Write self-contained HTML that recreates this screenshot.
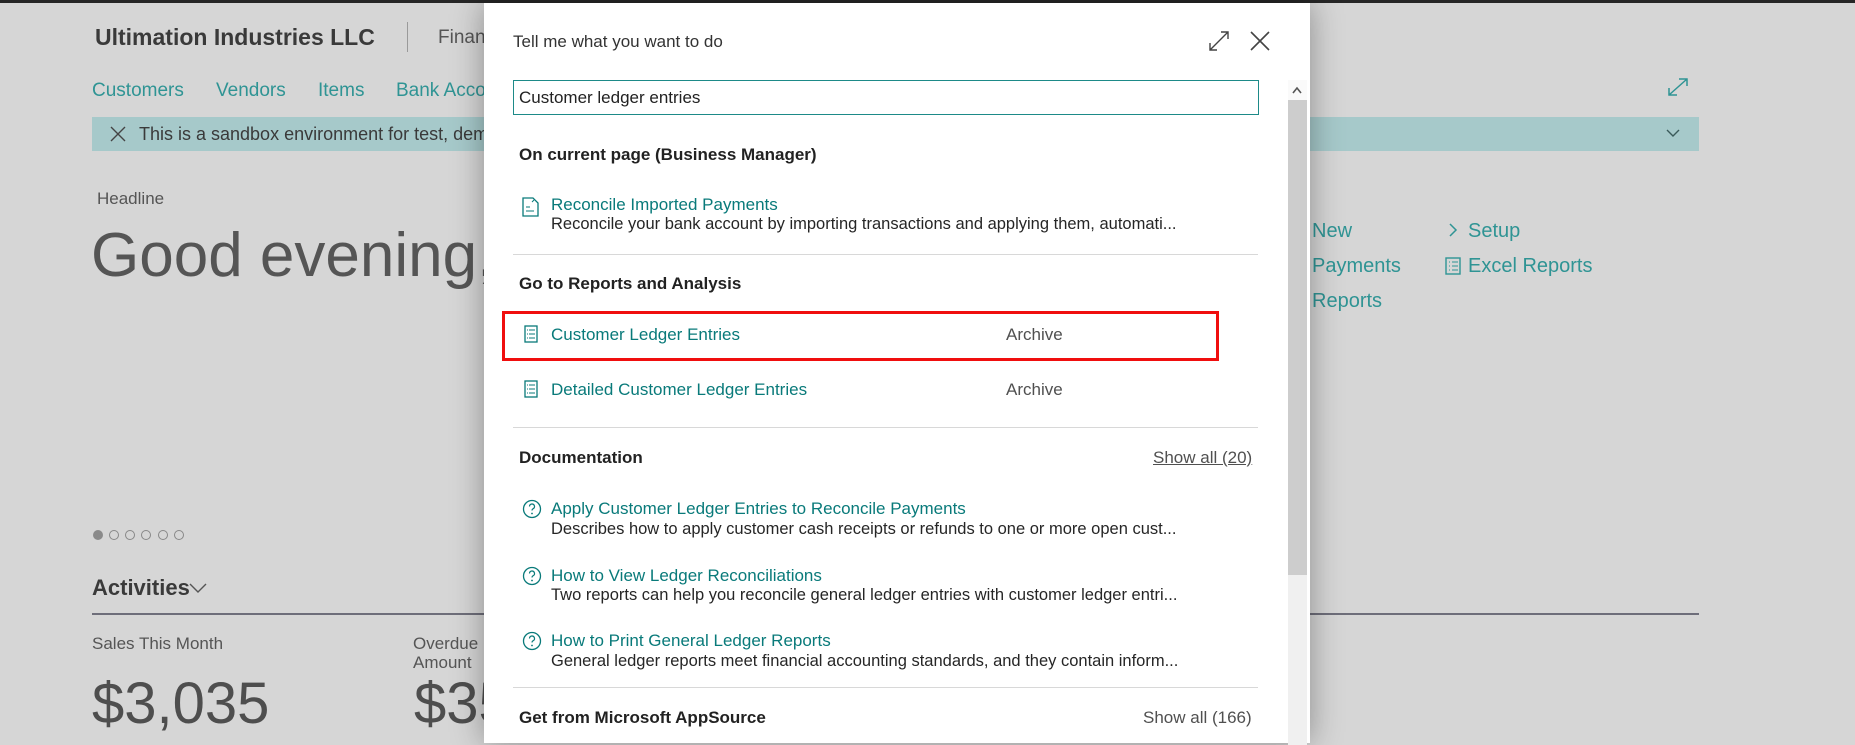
<!DOCTYPE html>
<html><head><meta charset="utf-8"><style>
*{margin:0;padding:0;box-sizing:border-box}
body{width:1855px;height:737px;overflow:hidden;background:#d6d6d6;font-family:"Liberation Sans",sans-serif;position:relative}
.a{position:absolute;white-space:nowrap}
.bg{color:#3f3f3f}
.tl{color:#2f9494}
.dlg{position:absolute;left:484px;top:3px;width:826px;height:740px;background:#fff;box-shadow:0 0 30px rgba(0,0,0,.35)}
.d{position:absolute;white-space:nowrap;font-size:17px}
.h{font-weight:bold;color:#222;font-size:17px}
.lk{color:#097a7a}
.ds{color:#262626;font-size:16.5px;overflow:hidden;text-overflow:ellipsis;width:700px}
.hr{position:absolute;left:29px;width:745px;height:1px;background:#d8d8d8}
.gr{color:#505050}
</style></head><body>
<div class="a" style="left:0;top:0;width:1855px;height:3px;background:#262626"></div>
<div class="a bg" style="left:95px;top:24px;font-size:23px;font-weight:bold;color:#3a3a3a">Ultimation Industries LLC</div>
<div class="a" style="left:407px;top:22px;width:1px;height:30px;background:#9a9a9a"></div>
<div class="a" style="left:438px;top:27px;font-size:19px;color:#555">Finance</div>
<div class="a tl" style="left:92px;top:80px;font-size:19px">Customers</div>
<div class="a tl" style="left:216px;top:80px;font-size:19px">Vendors</div>
<div class="a tl" style="left:318px;top:80px;font-size:19px">Items</div>
<div class="a tl" style="left:396px;top:80px;font-size:19px">Bank Accounts</div>
<svg class="a" style="left:1666px;top:76px" width="24" height="22" viewBox="0 0 24 22"><path d="M3 19L21 3M13 3h8v7M3 12v7h8" fill="none" stroke="#2f9494" stroke-width="1.5"/></svg>
<div class="a" style="left:92px;top:117px;width:1607px;height:34px;background:#a6c9ca"></div>
<svg class="a" style="left:110px;top:126px" width="16" height="16"><path d="M1 1L15 15M15 1L1 15" stroke="#444" stroke-width="1.4"/></svg>
<div class="a" style="left:139px;top:124px;font-size:18px;color:#3a3a3a">This is a sandbox environment for test, demo</div>
<svg class="a" style="left:1665px;top:128px" width="16" height="10"><path d="M2 2l6 6 6-6" fill="none" stroke="#3a5a5a" stroke-width="1.4"/></svg>
<div class="a" style="left:97px;top:189px;font-size:17px;color:#555">Headline</div>
<div class="a" style="left:91px;top:220px;font-size:62px;color:#555">Good evening,</div>
<div class="a" style="left:93px;top:530px;width:10px;height:10px;border-radius:50%;background:#8a8a8a"></div>
<div class="a" style="left:109px;top:530px;width:10px;height:10px;border-radius:50%;border:1px solid #888"></div>
<div class="a" style="left:125px;top:530px;width:10px;height:10px;border-radius:50%;border:1px solid #888"></div>
<div class="a" style="left:141px;top:530px;width:10px;height:10px;border-radius:50%;border:1px solid #888"></div>
<div class="a" style="left:158px;top:530px;width:10px;height:10px;border-radius:50%;border:1px solid #888"></div>
<div class="a" style="left:174px;top:530px;width:10px;height:10px;border-radius:50%;border:1px solid #888"></div>
<div class="a" style="left:92px;top:575px;font-size:22px;font-weight:bold;color:#3a3a3a">Activities</div>
<svg class="a" style="left:188px;top:582px" width="20" height="12"><path d="M2 2l8 8 8-8" fill="none" stroke="#555" stroke-width="1.4"/></svg>
<div class="a" style="left:92px;top:613px;width:1607px;height:2px;background:#6e6e7a"></div>
<div class="a" style="left:92px;top:634px;font-size:17px;color:#555">Sales This Month</div>
<div class="a" style="left:92px;top:670px;font-size:58px;color:#4e4e4e">$3,035</div>
<div class="a" style="left:413px;top:634px;font-size:17px;color:#555;line-height:19px">Overdue<br>Amount</div>
<div class="a" style="left:414px;top:670px;font-size:58px;color:#4e4e4e">$35</div>
<div class="a tl" style="left:1312px;top:220px;font-size:20px">New</div>
<div class="a tl" style="left:1312px;top:255px;font-size:20px">Payments</div>
<div class="a tl" style="left:1312px;top:290px;font-size:20px">Reports</div>
<svg class="a" style="left:1448px;top:222px" width="10" height="16"><path d="M2 2l6 6-6 6" fill="none" stroke="#2f9494" stroke-width="1.5"/></svg>
<div class="a tl" style="left:1468px;top:220px;font-size:20px">Setup</div>
<svg class="a" style="left:1445px;top:257px" width="16" height="18"><rect x="1" y="1" width="14" height="16" fill="none" stroke="#2f9494" stroke-width="1.4"/><path d="M4 5h1M7 5h6M4 9h1M7 9h6M4 13h1M7 13h6" stroke="#2f9494"/></svg>
<div class="a tl" style="left:1468px;top:255px;font-size:20px">Excel Reports</div>

<div class="dlg">
<div class="d" style="left:29px;top:29px;color:#333">Tell me what you want to do</div>
<svg class="d" style="left:724px;top:27px" width="22" height="22"><path d="M2 20L20 2M13 2h7v7M2 13v7h7" fill="none" stroke="#444" stroke-width="1.4"/></svg>
<svg class="d" style="left:765px;top:27px" width="22" height="22"><path d="M2 2L20 20M20 2L2 20" stroke="#444" stroke-width="1.6"/></svg>
<div class="d" style="left:29px;top:77px;width:746px;height:35px;border:1.5px solid #1d8a88"></div>
<div class="d" style="left:35px;top:85px;color:#222">Customer ledger entries</div>
<div class="d" style="left:804px;top:77px;width:19px;height:20px;background:#fafafa"></div>
<svg class="d" style="left:808px;top:83px" width="10" height="8"><path d="M1 7l4-5 4 5" fill="none" stroke="#555" stroke-width="1.6"/></svg>
<div class="d" style="left:804px;top:97px;width:19px;height:475px;background:#cdcdcd"></div>
<div class="d" style="left:804px;top:572px;width:19px;height:170px;background:#f0f0f0"></div>
<div class="d h" style="left:35px;top:142px">On current page (Business Manager)</div>
<svg class="d" style="left:38px;top:192px" width="18" height="22"><path d="M1 3h10l5 5v13H1z" fill="none" stroke="#097a7a" stroke-width="1.3"/><path d="M4 12h4M4 16h8M10 7l2-2" stroke="#097a7a"/></svg>
<div class="d lk" style="left:67px;top:192px">Reconcile Imported Payments</div>
<div class="d ds" style="left:67px;top:212px">Reconcile your bank account by importing transactions and applying them, automati...</div>
<div class="hr" style="top:251px"></div>
<div class="d h" style="left:35px;top:271px">Go to Reports and Analysis</div>
<div class="d" style="left:18px;top:308px;width:717px;height:50px;border:3px solid #f00e0e"></div>
<svg class="d" style="left:40px;top:322px" width="14" height="18"><rect x="1" y="1" width="12" height="16" fill="none" stroke="#097a7a" stroke-width="1.3"/><path d="M3 5h1M5 5h6M3 9h1M5 9h6M3 13h1M5 13h6" stroke="#097a7a"/></svg>
<div class="d lk" style="left:67px;top:322px">Customer Ledger Entries</div>
<div class="d gr" style="left:522px;top:322px">Archive</div>
<svg class="d" style="left:40px;top:377px" width="14" height="18"><rect x="1" y="1" width="12" height="16" fill="none" stroke="#097a7a" stroke-width="1.3"/><path d="M3 5h1M5 5h6M3 9h1M5 9h6M3 13h1M5 13h6" stroke="#097a7a"/></svg>
<div class="d lk" style="left:67px;top:377px">Detailed Customer Ledger Entries</div>
<div class="d gr" style="left:522px;top:377px">Archive</div>
<div class="hr" style="top:424px"></div>
<div class="d h" style="left:35px;top:445px">Documentation</div>
<div class="d gr" style="left:669px;top:445px;text-decoration:underline">Show all (20)</div>
<svg class="d" style="left:38px;top:496px" width="20" height="20"><circle cx="10" cy="10" r="8.5" fill="none" stroke="#097a7a" stroke-width="1.3"/><path d="M7.5 7.5a2.5 2.5 0 1 1 3.5 2.3c-.7.4-1 .9-1 1.7" fill="none" stroke="#097a7a" stroke-width="1.2"/><circle cx="10" cy="14.5" r=".9" fill="#097a7a"/></svg>
<div class="d lk" style="left:67px;top:496px">Apply Customer Ledger Entries to Reconcile Payments</div>
<div class="d ds" style="left:67px;top:517px">Describes how to apply customer cash receipts or refunds to one or more open cust...</div>
<svg class="d" style="left:38px;top:563px" width="20" height="20"><circle cx="10" cy="10" r="8.5" fill="none" stroke="#097a7a" stroke-width="1.3"/><path d="M7.5 7.5a2.5 2.5 0 1 1 3.5 2.3c-.7.4-1 .9-1 1.7" fill="none" stroke="#097a7a" stroke-width="1.2"/><circle cx="10" cy="14.5" r=".9" fill="#097a7a"/></svg>
<div class="d lk" style="left:67px;top:563px">How to View Ledger Reconciliations</div>
<div class="d ds" style="left:67px;top:583px">Two reports can help you reconcile general ledger entries with customer ledger entri...</div>
<svg class="d" style="left:38px;top:628px" width="20" height="20"><circle cx="10" cy="10" r="8.5" fill="none" stroke="#097a7a" stroke-width="1.3"/><path d="M7.5 7.5a2.5 2.5 0 1 1 3.5 2.3c-.7.4-1 .9-1 1.7" fill="none" stroke="#097a7a" stroke-width="1.2"/><circle cx="10" cy="14.5" r=".9" fill="#097a7a"/></svg>
<div class="d lk" style="left:67px;top:628px">How to Print General Ledger Reports</div>
<div class="d ds" style="left:67px;top:649px">General ledger reports meet financial accounting standards, and they contain inform...</div>
<div class="hr" style="top:684px"></div>
<div class="d h" style="left:35px;top:705px">Get from Microsoft AppSource</div>
<div class="d gr" style="left:659px;top:705px">Show all (166)</div>
</div>
</body></html>
